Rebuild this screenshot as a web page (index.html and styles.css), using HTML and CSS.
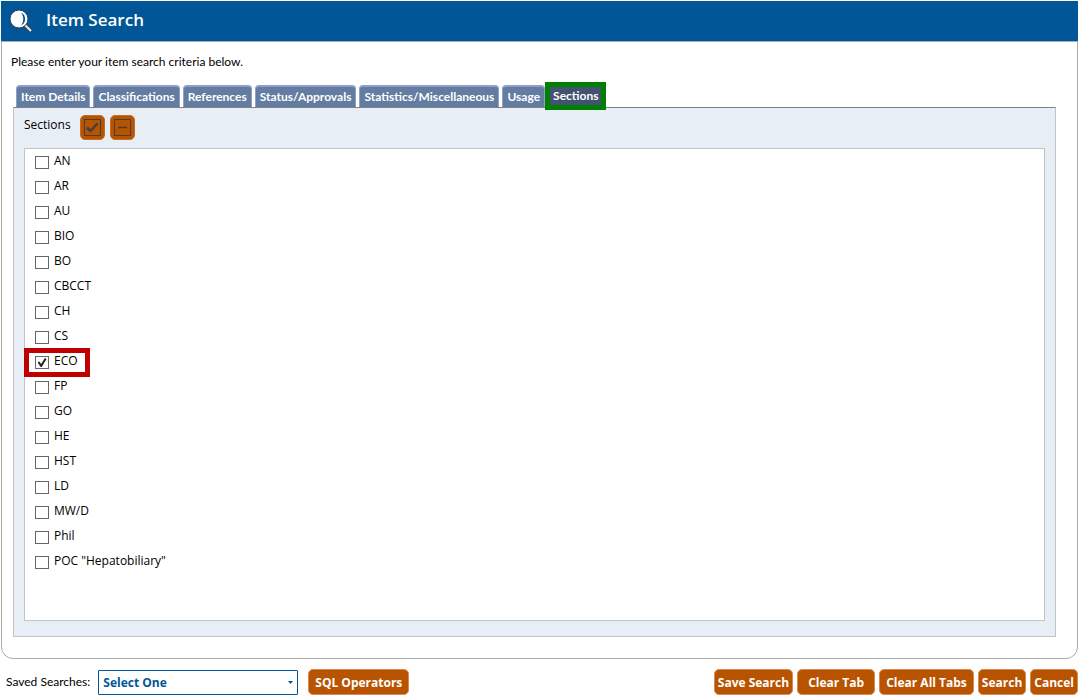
FILE: index.html
```
<!DOCTYPE html>
<html lang="en">
<head>
    <meta charset="UTF-8">
    <meta name="viewport" content="width=device-width, initial-scale=1.0">
    <title>Item Search</title>
    <link rel="stylesheet" href="styles.css">
</head>
<body>
    <header class="header">
        <svg class="header-icon" width="24" height="24" viewBox="0 0 24 24" aria-hidden="true">
            <path d="M16 16l6 6" stroke="#3d4656" stroke-width="4"/>
            <path d="M16 16l6 6" stroke="#e8edf3" stroke-width="2"/>
            <circle cx="10" cy="10" r="9" fill="#fff" stroke="#2f4260"/>
            <path d="M12 3.500a7.200 7.200 0 0 1 0 13c3-4 3-9 0-13z" fill="#005696"/>
        </svg>
        <h1>Item Search</h1>
    </header>

    <main class="content">
        <p class="intro">Please enter your item search criteria below.</p>

        <div class="tabs" role="tablist">
            <button type="button" class="tab" role="tab">Item Details</button>
            <button type="button" class="tab" role="tab">Classifications</button>
            <button type="button" class="tab" role="tab">References</button>
            <button type="button" class="tab" role="tab">Status/Approvals</button>
            <button type="button" class="tab" role="tab">Statistics/Miscellaneous</button>
            <button type="button" class="tab" role="tab">Usage</button>
            <button type="button" class="tab active" role="tab" aria-selected="true">Sections</button>
        </div>

        <section class="tab-panel">
            <div class="toolbar">
                <h2>Sections</h2>
                <button type="button" class="icon-btn" aria-label="Select all">
                    <svg width="17" height="17" viewBox="0 0 17 17">
                        <rect x="0.5" y="0.5" width="16" height="16" fill="none" stroke="#404040"/>
                        <path d="M3 8.5l3.500 3.500 7-7.500" fill="none" stroke="#404040" stroke-width="2.500"/>
                    </svg>
                </button>
                <button type="button" class="icon-btn" aria-label="Clear selection">
                    <svg width="17" height="17" viewBox="0 0 17 17">
                        <rect x="0.5" y="0.5" width="16" height="16" fill="none" stroke="#404040"/>
                        <path d="M4 8.5h9" stroke="#404040" stroke-width="1.5"/>
                    </svg>
                </button>
            </div>

            <ul class="section-list">
                <li><label><input type="checkbox">AN</label></li>
                <li><label><input type="checkbox">AR</label></li>
                <li><label><input type="checkbox">AU</label></li>
                <li><label><input type="checkbox">BIO</label></li>
                <li><label><input type="checkbox">BO</label></li>
                <li><label><input type="checkbox">CBCCT</label></li>
                <li><label><input type="checkbox">CH</label></li>
                <li><label><input type="checkbox">CS</label></li>
                <li><label class="marked"><input type="checkbox" checked>ECO</label></li>
                <li><label><input type="checkbox">FP</label></li>
                <li><label><input type="checkbox">GO</label></li>
                <li><label><input type="checkbox">HE</label></li>
                <li><label><input type="checkbox">HST</label></li>
                <li><label><input type="checkbox">LD</label></li>
                <li><label><input type="checkbox">MW/D</label></li>
                <li><label><input type="checkbox">Phil</label></li>
                <li><label><input type="checkbox">POC "Hepatobiliary"</label></li>
            </ul>
        </section>
    </main>

    <footer class="footer">
        <label class="saved-label" for="savedSearches">Saved Searches:</label>
        <div class="select-wrap">
            <select id="savedSearches">
                <option>Select One</option>
            </select>
            <svg class="arrow" width="5" height="3" viewBox="0 0 5 3" aria-hidden="true">
                <path d="M0 0h5L2.5 3z" fill="#005696"/>
            </svg>
        </div>
        <button type="button" class="btn wide">SQL Operators</button>
        <div class="actions">
            <button type="button" class="btn">Save Search</button>
            <button type="button" class="btn wider">Clear Tab</button>
            <button type="button" class="btn wide">Clear All Tabs</button>
            <button type="button" class="btn">Search</button>
            <button type="button" class="btn">Cancel</button>
        </div>
    </footer>
</body>
</html>
```
FILE: styles.css
```
:root {
    --blue: #005696;
    --orange: #b85300;
    --orange-edge: #d98a52;
    --tab: #637ca1;
    --tab-edge: #949dc9;
    --panel: #e7eef6;
    --line: #c3c3c3;
}

* {
    box-sizing: border-box;
    margin: 0;
    padding: 0;
}

body {
    font-family: 'Open Sans', 'Noto Sans', sans-serif;
    font-size: 12px;
    line-height: 16px;
    color: #000;
    background: #fff;
    min-height: 100vh;
    padding: 1px 5px 5px 1px;
    display: flex;
    flex-direction: column;
}

button,
select {
    font-family: inherit;
    font-size: 12px;
    cursor: pointer;
}

/* Title bar */
.header {
    display: flex;
    align-items: center;
    gap: 13px;
    height: 40px;
    padding: 0 8px;
    background: var(--blue);
    color: #fff;
}

.header h1 {
    font-size: 17px;
    line-height: 24px;
    font-weight: 600;
    padding-bottom: 2px;
}

/* Main area */
.content {
    flex: 1;
    display: flex;
    flex-direction: column;
    padding: 12px 21px 21px 11px;
    border: 1px solid #aaa;
    border-radius: 0 0 12px 12px;
}

.intro,
.saved-label {
    font-family: Lato, sans-serif;
}

.intro {
    margin-left: -2px;
}

/* Tabs */
.tabs {
    display: flex;
    align-items: flex-end;
    gap: 3px;
    height: 37px;
    padding-left: 3px;
}

.tab {
    height: 22px;
    padding: 0 4px 2px;
    border: 1px solid var(--tab-edge);
    border-width: 2px 1px 0;
    border-radius: 4px 4px 0 0;
    background: var(--tab);
    color: #fff;
    font-family: Lato, sans-serif;
    font-weight: 700;
}

.tab.active {
    position: relative;
    height: 28px;
    margin: 0 0 -3px -3px;
    padding: 0 3px 2px;
    border: 5px solid #008000;
    border-radius: 0;
    background: #435270;
}

.tab-panel {
    flex: 1;
    display: flex;
    flex-direction: column;
    padding: 7px 10px 15px;
    background: var(--panel);
    border: 1px solid var(--line);
    border-top-color: #808080;
}

.toolbar {
    display: flex;
    gap: 5px;
    margin-bottom: 8px;
}

.toolbar h2 {
    font-size: 12px;
    line-height: 20px;
    font-weight: 400;
    margin-right: 4px;
}

.icon-btn {
    display: grid;
    place-items: center;
    width: 25px;
    height: 25px;
    border: 1px solid #c96c20;
    border-radius: 5px;
    background: var(--orange);
}

.section-list {
    flex: 1;
    list-style: none;
    background: #fff;
    border: 1px solid var(--line);
}

.section-list label {
    position: relative;
    display: inline-flex;
    gap: 5px;
    height: 25px;
    padding: 0 12px 0 10px;
    line-height: 24px;
}

.section-list input {
    appearance: none;
    width: 14px;
    height: 13px;
    margin-top: 7px;
    border: 1px solid #666;
    background: #fff;
}

.section-list input:checked {
    display: grid;
    place-items: center;
}

.section-list input:checked::before {
    content: '';
    width: 9px;
    height: 9px;
    background: #222;
    clip-path: polygon(0 48%, 20% 40%, 40% 67%, 82% 0, 100% 10%, 47% 100%, 35% 100%);
}

.marked::after {
    content: '';
    position: absolute;
    inset: -1px 0 -3px -1px;
    border: 5px solid #c00000;
}

/* Bottom bar */
.footer {
    display: flex;
    align-items: center;
    padding: 10px 0 0 5px;
}

.select-wrap {
    position: relative;
    width: 200px;
    margin: 0 10px 0 8px;
}

.select-wrap select {
    appearance: none;
    display: block;
    width: 100%;
    height: 25px;
    padding: 0 20px 0 4px;
    border: 1px solid var(--blue);
    border-radius: 1px;
    background: #fff;
    color: var(--blue);
    font-weight: 700;
}

.arrow {
    position: absolute;
    top: 11px;
    right: 5px;
    pointer-events: none;
}

.btn {
    height: 26px;
    padding: 0 3px;
    border: 1px solid var(--orange-edge);
    border-radius: 5px;
    background: var(--orange);
    color: #fff;
    font-weight: 700;
}

.btn.wide {
    padding: 0 6px;
}

.btn.wider {
    padding: 0 10px;
}

.actions {
    display: flex;
    gap: 4px;
    margin-left: auto;
}
```
